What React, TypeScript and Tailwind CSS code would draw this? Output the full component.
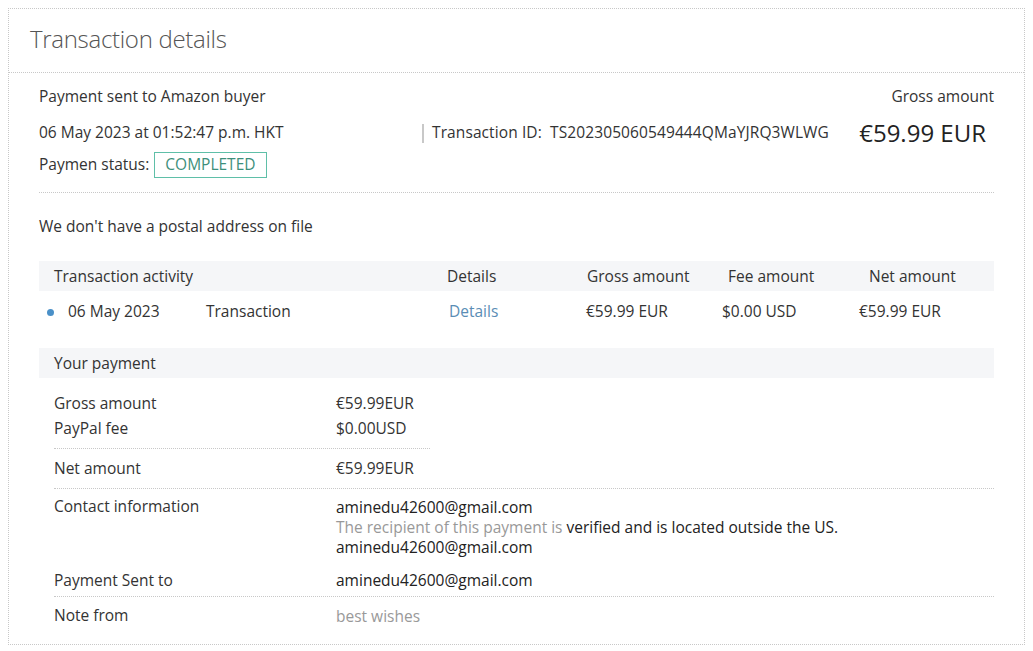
import React from "react";

const font = { fontFamily: '"Open Sans", "Noto Sans", sans-serif' };

export default function App() {
  return (
    <div className="w-[1033px] h-[651px] bg-white text-[#333] pt-[8px] pl-[8px]" style={font}>
      <div className="w-[1017px] h-[637px] border border-dotted border-[#c8c8c8]">
        <div className="h-[64px] border-b border-dotted border-[#c8c8c8] pl-[21px] pb-[4px] flex items-center">
          <h1 className="text-[24px] font-light text-[#555] tracking-[-0.3px]">Transaction details</h1>
        </div>
        <div className="px-[30px] text-[15.5px]">
          <div className="border-b border-dotted border-[#c8c8c8] pt-[13px] pb-[12px]">
            <div className="flex justify-between h-[22px] items-center">
              <span>Payment sent to Amazon buyer</span>
              <span>Gross amount</span>
            </div>
            <div className="flex items-center h-[34px] mt-[8px]">
              <span className="w-[383px]">06 May 2023 at 01:52:47 p.m. HKT</span>
              <span className="w-[2px] h-[19px] bg-[#c8c8c8] mr-[8px]"></span>
              <span className="tracking-[0.1px]">Transaction ID:&nbsp;&nbsp;TS202305060549444QMaYJRQ3WLWG</span>
              <span className="ml-auto mr-[8px] text-[24px] text-[#222]">€59.99 EUR</span>
            </div>
            <div className="flex items-center h-[30px]">
              <span>Paymen status:</span>
              <span className="ml-[5px] border border-[#5fbfa8] text-[#3d8f7b] px-[10px] h-[26px] flex items-center">COMPLETED</span>
            </div>
          </div>
          <div className="h-[68px] flex items-center">We don't have a postal address on file</div>
          <div className="bg-[#f5f6f8] h-[30px] flex items-center pt-[2px]">
            <span className="ml-[15px] w-[393px]">Transaction activity</span>
            <span className="w-[140px]">Details</span>
            <span className="w-[141px]">Gross amount</span>
            <span className="w-[141px]">Fee amount</span>
            <span>Net amount</span>
          </div>
          <div className="h-[42px] flex items-center">
            <span className="ml-[8px] w-[7px] h-[7px] rounded-full bg-[#4a90c8] mr-[14px]"></span>
            <span className="w-[138px]">06 May 2023</span>
            <span className="w-[243px]">Transaction</span>
            <span className="w-[137px] text-[#5a8db5]">Details</span>
            <span className="w-[136px]">€59.99 EUR</span>
            <span className="w-[137px] mt-[-1px]">$0.00 USD</span>
            <span>€59.99 EUR</span>
          </div>
          <div className="mt-[15px] bg-[#f5f6f8] h-[30px] flex items-center pt-[2px]">
            <span className="ml-[15px]">Your payment</span>
          </div>
          <div className="pl-[15px]">
            <div className="w-[376px] border-b border-dotted border-[#c8c8c8] pt-[13px] pb-[7px]">
              <div className="flex h-[25px] items-center">
                <span className="w-[282px]">Gross amount</span>
                <span>€59.99EUR</span>
              </div>
              <div className="flex h-[25px] items-center">
                <span className="w-[282px]">PayPal fee</span>
                <span>$0.00USD</span>
              </div>
            </div>
            <div className="flex h-[40px] items-center border-b border-dotted border-[#c8c8c8]">
              <span className="w-[282px]">Net amount</span>
              <span>€59.99EUR</span>
            </div>
            <div className="flex pt-[8px]">
              <span className="w-[282px] h-[20px] flex items-center">Contact information</span>
              <div className="flex flex-col text-[#222]">
                <span className="h-[20px] flex items-center mt-[1px]">aminedu42600@gmail.com</span>
                <span className="h-[20px] flex items-center"><span className="text-[#999]">The recipient of this payment is&nbsp;</span>verified and is located outside the US.</span>
                <span className="h-[20px] flex items-center">aminedu42600@gmail.com</span>
              </div>
            </div>
            <div className="flex h-[39px] items-center pt-[8px] border-b border-dotted border-[#c8c8c8]">
              <span className="w-[282px]">Payment Sent to</span>
              <span className="text-[#222]">aminedu42600@gmail.com</span>
            </div>
            <div className="flex h-[38px] items-center">
              <span className="w-[282px]">Note from</span>
              <span className="text-[#999] mt-[2px]">best wishes</span>
            </div>
          </div>
        </div>
      </div>
    </div>
  );
}
